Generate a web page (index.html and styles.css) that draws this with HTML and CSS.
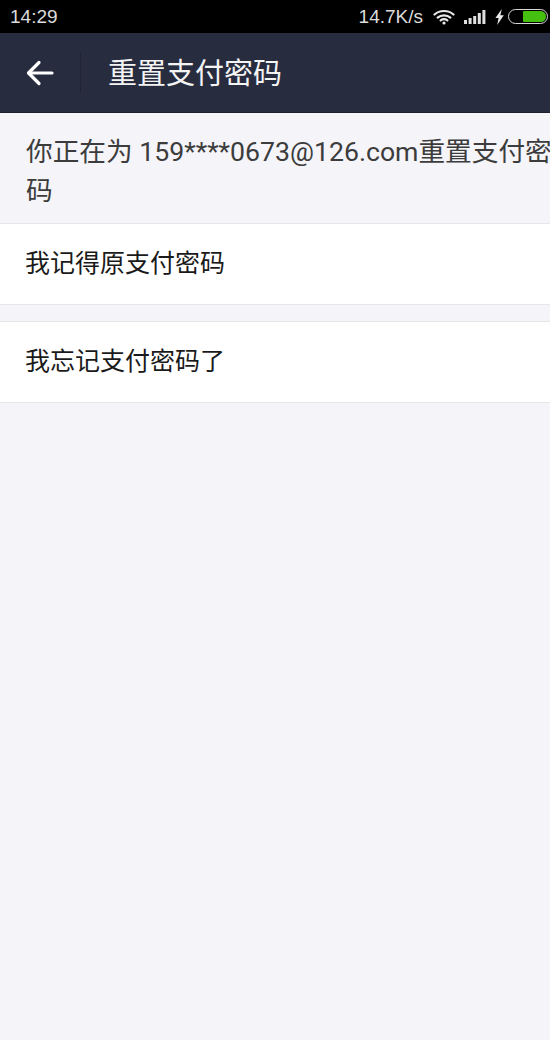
FILE: index.html
```html
<!DOCTYPE html>
<html lang="zh">
<head>
<meta charset="utf-8">
<title>重置支付密码</title>
<link rel="stylesheet" href="styles.css">
</head>
<body>
<div class="status">
  <span class="time">14:29</span>
  <div class="status-right">
    <span class="speed">14.7K/s</span>
    <svg class="wifi" width="22" height="16" viewBox="0 0 22 16" fill="none" stroke="#e8e8e8" stroke-width="2.2" stroke-linecap="round"><path d="M1.5 5.5C6.5 .8 15.5 .8 20.5 5.5"/><path d="M4.6 8.6C8 5.6 14 5.6 17.4 8.6"/><path d="M7.6 11.4C9.5 10 12.5 10 14.4 11.4"/><circle cx="11" cy="14" r="1.6" fill="#e8e8e8" stroke="none"/></svg>
    <svg class="signal" width="22" height="14" viewBox="0 0 22 14" fill="#e0e0e0"><rect x="0" y="10" width="3" height="4"/><rect x="4.6" y="8" width="3" height="6"/><rect x="9.2" y="6" width="3" height="8"/><rect x="13.8" y="3" width="3" height="11"/><rect x="18.4" y="0" width="3" height="14"/></svg>
    <svg class="bolt" width="9" height="16" viewBox="0 0 9 16" fill="#e8e8e8"><path d="M6.8 0 L0.4 9 H3.6 L2.2 16 L8.8 6.2 H5.4 Z"/></svg>
    <div class="battery"><div class="battery-fill"></div></div>
  </div>
</div>
<header class="bar">
  <button class="back" aria-label="返回">
    <svg width="28" height="26" viewBox="0 0 28 26" fill="none" stroke="#fff" stroke-width="3.2" stroke-linecap="round" stroke-linejoin="round"><path d="M26 13H3"/><path d="M13 2.5 2.5 13 13 23.5"/></svg>
  </button>
  <h1 class="title">重置支付密码</h1>
</header>
<p class="notice">你正在为 159****0673@126.com重置支付密码</p>
<div class="row">我记得原支付密码</div>
<div class="row second">我忘记支付密码了</div>
</body>
</html>
```
FILE: styles.css
```css
* { box-sizing: border-box; }
html, body { margin: 0; padding: 0; }
body {
  width: 550px;
  height: 1040px;
  overflow: hidden;
  background: #f4f4f9;
  font-family: "Roboto", "Noto Sans CJK SC", sans-serif;
}
.status {
  height: 33px;
  background: #000;
  color: #dcdcdc;
  display: flex;
  justify-content: space-between;
  align-items: center;
  padding: 0 0 0 10px;
}
.time { font: 19px "Liberation Sans", sans-serif; }
.status-right { display: flex; align-items: center; }
.speed { font: 19px "Liberation Sans", sans-serif; margin-right: 10px; }
.wifi { margin-right: 9px; }
.signal { margin-right: 9px; }
.bolt { margin-right: 4px; }
.battery {
  width: 40px;
  height: 15px;
  border: 1px solid #d8d8d8;
  border-radius: 8px;
  padding: 1px 1px 1px 14px;
  margin-right: 2px;
}
.battery-fill { width: 100%; height: 100%; background: #45c010; border-radius: 1px 6px 6px 1px; }
.bar {
  height: 80px;
  background: #282c3f;
  border-bottom: 1px solid #1d2030;
  display: flex;
  align-items: center;
  color: #fff;
}
.back {
  width: 81px;
  height: 40px;
  padding: 0 0 0 26px;
  border: 0;
  border-right: 1px solid #212434;
  background: none;
  display: flex;
  align-items: center;
}
.title {
  margin: 0 0 0 27px;
  padding-bottom: 3px;
  font-size: 29px;
  font-weight: 400;
  color: #f4f4f4;
}
.notice {
  margin: 0;
  height: 110px;
  padding: 20px 0 0 26px;
  font-size: 26.67px;
  line-height: 39px;
  color: #3c3c3c;
  width: 562px;
  word-break: break-all;
}
.row {
  height: 82px;
  background: #fff;
  border-top: 1px solid #e6e6e8;
  border-bottom: 1px solid #e6e6e8;
  padding: 0 0 6px 25px;
  display: flex;
  align-items: center;
  font-size: 25px;
  color: #1a1a1a;
}
.second { margin-top: 16px; }
```
